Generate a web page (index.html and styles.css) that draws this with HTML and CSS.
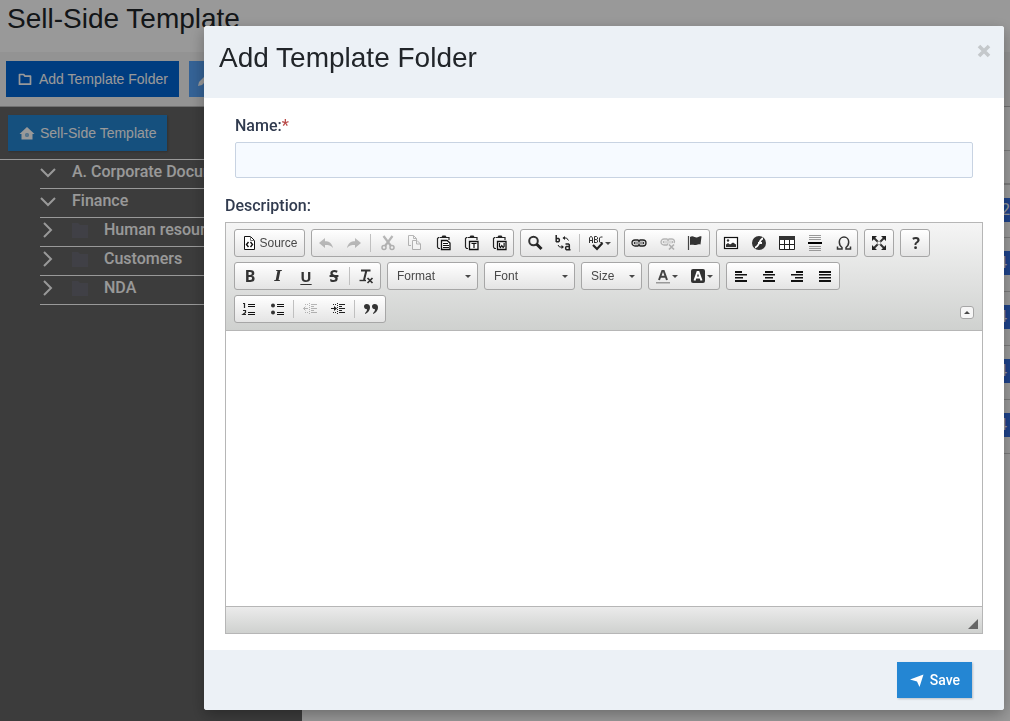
FILE: index.html
```html
<!DOCTYPE html>
<html lang="en">
<head>
<meta charset="utf-8">
<title>Sell-Side Template</title>
<link rel="stylesheet" href="styles.css">
</head>
<body>
<div class="page">
  <header class="page-head"><h1>Sell-Side Template</h1></header>
  <div class="actions">
    <button class="btn btn-primary" type="button">
      <svg class="icon" viewBox="0 0 16 16"><path d="M2.500 3.500h4.200l1.300 1.700h5.500v8H2.500z" fill="none" stroke="currentColor" stroke-width="1.700" stroke-linejoin="round"/></svg>
      Add Template Folder
    </button>
    <button class="btn btn-edit" type="button" aria-label="Edit">
      <svg class="icon" viewBox="0 0 16 16"><path d="M1 15l1-4 8-8 3 3-8 8zM11 2l1.500-1.500 3 3L14 5z" fill="currentColor"/></svg>
    </button>
  </div>
  <div class="columns">
    <aside class="sidebar">
      <div class="side-top">
        <button class="btn btn-home" type="button">
          <svg class="icon" viewBox="0 0 16 16"><path fill-rule="evenodd" d="M8 2l7.500 7H13.500v5.500h-11V9H.5zM6.500 8.500v3h3v-3zM7.300 9.300h1.400v1.400H7.300z" fill="currentColor"/></svg>
          Sell-Side Template
        </button>
      </div>
      <ul class="tree">
        <li><svg class="chev" viewBox="0 0 16 16"><path d="M1 5l7 7 7-7"/></svg>A. Corporate Documents</li>
        <li><svg class="chev" viewBox="0 0 16 16"><path d="M1 5l7 7 7-7"/></svg>Finance</li>
        <li><svg class="chev" viewBox="0 0 16 16"><path d="M4 1l7 7-7 7"/></svg><svg class="folder" viewBox="0 0 16 16"><path d="M0 1h6l2 2h8v13H0z"/></svg>Human resources</li>
        <li><svg class="chev" viewBox="0 0 16 16"><path d="M4 1l7 7-7 7"/></svg><svg class="folder" viewBox="0 0 16 16"><path d="M0 1h6l2 2h8v13H0z"/></svg>Customers</li>
        <li><svg class="chev" viewBox="0 0 16 16"><path d="M4 1l7 7-7 7"/></svg><svg class="folder" viewBox="0 0 16 16"><path d="M0 1h6l2 2h8v13H0z"/></svg>NDA</li>
      </ul>
    </aside>
    <main class="listing">
      <table class="grid">
        <thead>
          <tr><th></th></tr>
        </thead>
        <tbody>
          <tr><td><a class="count wide" href="#">2</a></td></tr>
          <tr><td><a class="count" href="#">4</a></td></tr>
          <tr><td><a class="count" href="#">4</a></td></tr>
          <tr><td><a class="count" href="#">4</a></td></tr>
          <tr><td><a class="count" href="#">4</a></td></tr>
        </tbody>
      </table>
    </main>
  </div>
</div>

<div class="overlay">
  <form class="modal" role="dialog" aria-labelledby="modal-title">
    <header class="modal-head">
      <h2 id="modal-title">Add Template Folder</h2>
      <button class="close" type="button" aria-label="Close"><svg class="icon" viewBox="0 0 16 16"><path d="M3 3l10 10M13 3L3 13" stroke="currentColor" stroke-width="3.600"/></svg></button>
    </header>
    <div class="modal-body">
      <div class="field">
        <label for="name">Name:<span class="req">*</span></label>
        <input id="name" type="text">
      </div>
      <label class="desc-label" for="description">Description:</label>
      <div class="editor">
        <div class="toolbar">
          <div class="groups">
            <div class="group">
              <button class="tool source" type="button"><svg class="icon" viewBox="0 0 16 16"><path d="M3.500 1.500h6l4 4v9h-10z" fill="#fff" stroke="#111"/><path d="M9.500 1.500v4h4" fill="none" stroke="#777"/><path d="M7.500 7L5.500 9.500l2 2.500M9.500 7l2 2.500-2 2.500" fill="none" stroke="#111" stroke-width="1.400"/></svg>Source</button>
            </div>
            <div class="group">
              <button class="tool off" type="button" aria-label="Undo"><svg class="icon" viewBox="0 0 16 16"><path d="M1 8l6-5v3.200c4 0 7 1.800 8 6.800-2-2.500-4.500-3-8-3V13z" fill="#333"/></svg></button>
              <button class="tool off" type="button" aria-label="Redo"><svg class="icon" viewBox="0 0 16 16"><path d="M15 8L9 3v3.200C5 6.200 2 8 1 13c2-2.500 4.500-3 8-3v3z" fill="#333"/></svg></button>
              <span class="sep"></span>
              <button class="tool off" type="button" aria-label="Cut"><svg class="icon shift" viewBox="0 0 16 16"><path d="M3.500 1l7.500 10M12.500 1L5 11" stroke="#222" stroke-width="2.200"/><circle cx="4" cy="12.500" r="2" fill="none" stroke="#222" stroke-width="1.500"/><circle cx="12" cy="12.500" r="2" fill="none" stroke="#222" stroke-width="1.500"/></svg></button>
              <button class="tool off" type="button" aria-label="Copy"><svg class="icon" viewBox="0 0 16 16"><path d="M4 10.500H1.500v-10h5l3 3V5M6.500.500v3h3" fill="none" stroke="#222"/><path d="M5.500 14.500v-9h4.500l3.500 3.500v5.500zM9.500 5.500V9h4" fill="#fff" stroke="#222"/></svg></button>
              <button class="tool" type="button" aria-label="Paste"><svg class="icon shift" viewBox="0 0 16 16"><path d="M3.500 2.500h-1l-1 1V12l1 1.500H4M11.500 2.500h1.500V5" fill="none" stroke="#222" stroke-width="1.200"/><path d="M4 3V2h1.500L6.500.500h3l1 1.500H12v1z" fill="#222"/><path d="M5.500 5.500h5.500l3 2.500v6.500H5.500z" fill="#fff" stroke="#111" stroke-width="1.300"/><path d="M7 8.500h5M7 10.500h6M7 12.500h6" stroke="#111"/></svg></button>
              <button class="tool" type="button" aria-label="Paste as plain text"><svg class="icon shift" viewBox="0 0 16 16"><path d="M3.500 2.500h-1l-1 1V12l1 1.500H4M11.500 2.500h1.500V5" fill="none" stroke="#222" stroke-width="1.200"/><path d="M4 3V2h1.500L6.500.500h3l1 1.500H12v1z" fill="#222"/><path d="M5.500 6.500h8.500v8H5.500z" fill="#fff" stroke="#111" stroke-width="1.300"/><path d="M7.500 8.500h5M10 8.500V13" stroke="#111" stroke-width="1.200"/></svg></button>
              <button class="tool" type="button" aria-label="Paste from Word"><svg class="icon shift" viewBox="0 0 16 16"><path d="M3.500 2.500h-1l-1 1V12l1 1.500H4M11.500 2.500h1.500V5" fill="none" stroke="#222" stroke-width="1.200"/><path d="M4 3V2h1.500L6.500.500h3l1 1.500H12v1z" fill="#222"/><path d="M5.500 6.500h8.500v8H5.500z" fill="#fff" stroke="#111" stroke-width="1.300"/><path d="M7.500 8v3.500l1 1 1.300-2 1.300 2 1-1V8" fill="none" stroke="#111" stroke-width="1.200"/></svg></button>
            </div>
            <div class="group">
              <button class="tool" type="button" aria-label="Find"><svg class="icon" viewBox="0 0 16 16"><circle cx="6.500" cy="6" r="4.300" fill="none" stroke="#333" stroke-width="2"/><path d="M9.500 9l5 5" stroke="#222" stroke-width="3"/></svg></button>
              <button class="tool" type="button" aria-label="Replace"><svg class="icon" viewBox="0 0 16 16"><path d="M1.200 0v7M1 3.500h2.500l.8.800V6l-.8.800H1M10.500 9h3l.8.800V15M14.500 11.500h-3l-.8.800V14l.8.700h4" fill="none" stroke="#222" stroke-width="1.500"/><path d="M8.500 3h3l2 2.500M3 10l1.500 2H7" fill="none" stroke="#222"/><path d="M10 1v4L7.500 3zM6.500 10v4L9 12z" fill="#222"/></svg></button>
              <span class="sep"></span>
              <button class="tool drop" type="button" aria-label="Spell check"><svg class="icon" viewBox="0 0 16 16"><path d="M1.500 8V3l1-1.500h1l1 1.500v5M1.500 5.500h3M6.500 8V1.500h2l1 1v1.500l-1 .7 1 .8V7l-1 .5h-2M6.500 4.500h2M14.500 2h-2L11.500 3v4l1 .500h2" fill="none" stroke="#333"/><path d="M5 10l4 4 5.500-6" fill="none" stroke="#222" stroke-width="2.200"/></svg></button>
            </div>
            <div class="group">
              <button class="tool" type="button" aria-label="Link"><svg class="icon" viewBox="0 0 16 16"><path d="M8 9.500L7 11H4a2.500 2.500 0 010-6h3l1 1.500L9 5h3a2.500 2.500 0 010 6H9z" fill="none" stroke="#222" stroke-width="1.300"/><path d="M4 8h8" stroke="#333" stroke-width="2.600" stroke-linecap="round"/><path d="M4 8h8" stroke="#fff"/></svg></button>
              <button class="tool off" type="button" aria-label="Unlink"><svg class="icon shift" viewBox="0 0 16 16"><path d="M8 8.500L7 10H4a2.500 2.500 0 010-6h3l1 1.500L9 4h3a2.500 2.500 0 012 4" fill="none" stroke="#222" stroke-width="1.300"/><path d="M4 7h8" stroke="#333" stroke-width="2.600" stroke-linecap="round"/><path d="M4 7h8" stroke="#fff"/><path d="M9 9.500l5 5M14 9.500l-5 5" stroke="#222" stroke-width="1.700"/></svg></button>
              <button class="tool" type="button" aria-label="Anchor"><svg class="icon" viewBox="0 0 16 16"><path d="M1.500 1v14" stroke="#444" stroke-width="1.200"/><path d="M3 2c3-2 5 1 7 .5S13 1 14.500 1.500L13.500 9.500c-3-1-4 1-6 .5S4 9.500 3 10z" fill="#333"/></svg></button>
            </div>
            <div class="group">
              <button class="tool" type="button" aria-label="Image"><svg class="icon" viewBox="0 0 16 16"><rect x="1.500" y="2.500" width="13" height="11" fill="#fff" stroke="#111" stroke-width="1.200"/><path d="M3 12V9.500l2-1.500 2 1.500L10 7.500l3 2V12z" fill="#333"/><circle cx="5" cy="5.500" r="1.200" fill="#333"/></svg></button>
              <button class="tool" type="button" aria-label="Flash"><svg class="icon" viewBox="0 0 16 16"><circle cx="8" cy="8" r="7" fill="#333"/><path d="M12 3.500C8.500 3.500 8.500 12 4 12.500M7 8h4" fill="none" stroke="#fff" stroke-width="1.800"/></svg></button>
              <button class="tool" type="button" aria-label="Table"><svg class="icon" viewBox="0 0 16 16"><path d="M.5 1.500h15v13H.5zM.5 9.500h15M5.500 4v10.500M10.500 4v10.500" fill="#fff" stroke="#222"/><path d="M0 1h16v4H0z" fill="#333"/></svg></button>
              <button class="tool" type="button" aria-label="Horizontal line"><svg class="icon" viewBox="0 0 16 16"><path d="M2 .5h12M2 2.500h12M2 4.500h12M2 11.500h12M2 13.500h12M2 15.500h12" stroke="#999"/><path d="M1 7h14v2H1z" fill="#000"/></svg></button>
              <button class="tool" type="button" aria-label="Special character"><svg class="icon shift" viewBox="0 0 16 16"><path d="M1.500 11.500V14H6v-1.500C4 11 3.300 9.300 3.300 7a4.700 5 0 019.400 0c0 2.300-.7 4-2.700 5.500V14h4.500v-2.500" fill="none" stroke="#333" stroke-width="1.500"/></svg></button>
            </div>
            <div class="group">
              <button class="tool" type="button" aria-label="Maximize"><svg class="icon" viewBox="0 0 16 16"><path d="M3 3l10 10M13 3L3 13" stroke="#333" stroke-width="2"/><path d="M1 1h5L1 6zM15 1v5l-5-5zM1 15v-5l5 5zM15 15h-5l5-5z" fill="#222"/><path d="M6.500 6.500h3v3h-3z" fill="#f4f4f4"/></svg></button>
            </div>
            <div class="group">
              <button class="tool letter" type="button" aria-label="About">?</button>
            </div>
            <div class="group">
              <button class="tool letter" type="button">B</button>
              <button class="tool letter italic" type="button">I</button>
              <button class="tool letter under" type="button">U</button>
              <button class="tool letter strike" type="button">S</button>
              <span class="sep"></span>
              <button class="tool" type="button" aria-label="Remove format"><svg class="icon" viewBox="0 0 16 16"><path d="M3 2.500h9.500M8.500 2L6 12" fill="none" stroke="#333" stroke-width="2"/><path d="M1.500 12.500h6.500" stroke="#333" stroke-width="1.400"/><path d="M9.500 10l5 5M14.500 10l-5 5" stroke="#333" stroke-width="1.700"/></svg></button>
            </div>
            <span class="combo"><select aria-label="Format"><option>Format</option></select></span>
            <span class="combo"><select aria-label="Font"><option>Font</option></select></span>
            <span class="combo small"><select aria-label="Size"><option>Size</option></select></span>
            <div class="group">
              <button class="tool drop" type="button" aria-label="Text color"><svg class="icon" viewBox="0 0 16 16"><path d="M4 12L7.300 3h1.400L12 12M5.500 8.800h5" fill="none" stroke="#444" stroke-width="2"/><path d="M1 14h14v1.500H1z" fill="#999"/></svg></button>
              <button class="tool drop" type="button" aria-label="Background color"><svg class="icon" viewBox="0 0 16 16"><rect x="1" y="1" width="14" height="14" rx="2" fill="#333"/><path d="M4.500 12.500L7.500 4h1l3 8.500M5.500 9.500h5" fill="none" stroke="#fff" stroke-width="2"/></svg></button>
            </div>
            <div class="group">
              <button class="tool" type="button" aria-label="Align left"><svg class="icon" viewBox="0 0 16 16"><path d="M2 3h7v2H2zM2 6h12v1.500H2zM2 9h8v1.500H2zM2 12h12v2H2z" fill="#111"/></svg></button>
              <button class="tool" type="button" aria-label="Center"><svg class="icon" viewBox="0 0 16 16"><path d="M4 3h8v2H4zM2 6h12v1.500H2zM4 9h8v1.500H4zM2 12h12v2H2z" fill="#111"/></svg></button>
              <button class="tool" type="button" aria-label="Align right"><svg class="icon" viewBox="0 0 16 16"><path d="M7 3h7v2H7zM2 6h12v1.500H2zM6 9h8v1.500H6zM2 12h12v2H2z" fill="#111"/></svg></button>
              <button class="tool" type="button" aria-label="Justify"><svg class="icon" viewBox="0 0 16 16"><path d="M2 3h12v2H2zM2 6h12v1.500H2zM2 9h12v1.500H2zM2 12h12v2H2z" fill="#111"/></svg></button>
            </div>
            <div class="group">
              <button class="tool" type="button" aria-label="Numbered list"><svg class="icon" viewBox="0 0 16 16"><path d="M2 2.500h1.500V7M2 9.500h2.500v2L2 13.500h3" fill="none" stroke="#222" stroke-width="1.200"/><path d="M7 3h7v1H7zM7 5h7v1H7zM7 11h7v1H7zM7 13h7v1H7z" fill="#111"/></svg></button>
              <button class="tool" type="button" aria-label="Bulleted list"><svg class="icon shift" viewBox="0 0 16 16"><circle cx="3" cy="4.500" r="2" fill="#333"/><circle cx="3" cy="11.500" r="2" fill="#333"/><path d="M7 3h7v1H7zM7 5h7v1H7zM7 11h7v1H7zM7 13h7v1H7z" fill="#111"/></svg></button>
              <span class="sep"></span>
              <button class="tool off" type="button" aria-label="Decrease indent"><svg class="icon" viewBox="0 0 16 16"><path d="M9 3.500h6M9 5.500h3M9 7.500h6M9 9.500h3M9 11.500h6" stroke="#222"/><path d="M7.500 2v12M3 3.500h3M3 11.500h3" stroke="#222" stroke-dasharray="1 1"/><path d="M1.500 7.500H6M3.500 5.500l-2 2 2 2" fill="none" stroke="#222"/></svg></button>
              <button class="tool" type="button" aria-label="Increase indent"><svg class="icon" viewBox="0 0 16 16"><path d="M9 3.500h6M9 5.500h3M9 7.500h6M9 9.500h3M9 11.500h6" stroke="#222"/><path d="M7.500 2v12M3 3.500h3M3 11.500h3" stroke="#222" stroke-dasharray="1 1"/><path d="M1 7.500h3" stroke="#222"/><path d="M4 5l3 2.500L4 10z" fill="#222"/></svg></button>
              <span class="sep"></span>
              <button class="tool" type="button" aria-label="Block quote"><svg class="icon" viewBox="0 0 16 16"><path d="M3.500 3C6 3 7.200 4.500 7 7s-2 4.800-5 6v-1c1.300-1 2-2.200 2-3.800C2.200 8.200 1 7.200 1 5.600S2 3 3.500 3zM11.500 3c2.500 0 3.700 1.500 3.500 4s-2 4.800-5 6v-1c1.300-1 2-2.200 2-3.800-1.800 0-3-1-3-2.600S10 3 11.500 3z" fill="#333"/></svg></button>
            </div>
          </div>
          <button class="collapse" type="button" aria-label="Collapse toolbar"></button>
        </div>
        <textarea id="description"></textarea>
        <div class="editor-foot"><span class="grip"></span></div>
      </div>
    </div>
    <footer class="modal-foot">
      <button class="btn btn-save" type="submit">
        <svg class="icon" viewBox="0 0 16 16"><path d="M14.500 2.500L10.500 15 8 9.500 1 7.500z" fill="currentColor"/></svg>
        Save
      </button>
    </footer>
  </form>
</div>
</body>
</html>
```
FILE: styles.css
```css
* { box-sizing: border-box; }
body {
  margin: 0;
  font-family: "Liberation Sans", Arial, sans-serif;
  font-size: 14px;
  color: #212529;
  background: #fff;
}
button, input, select, textarea { font: inherit; margin: 0; }
h1, h2 { margin: 0; font-size: 28px; font-weight: 400; line-height: 36px; }
.icon { width: 16px; height: 16px; display: block; flex: none; }

.page { display: flex; flex-direction: column; height: 100vh; overflow: hidden; }
.page-head { height: 52px; padding: 1px 7px; flex: none; }
.actions {
  display: flex;
  gap: 10px;
  flex: none;
  height: 55px;
  padding: 9px 6px;
  background: #f5f5f5;
  border-bottom: 1px solid #bbb;
}
.btn {
  display: inline-flex;
  align-items: center;
  gap: 6px;
  height: 36px;
  padding: 0 11px;
  border: 0;
  color: #fff;
  white-space: nowrap;
}
.btn-primary { background: #0066d6; }
.btn-edit { padding: 0 8px; background: #58a4fa; }
.btn-home, .btn-save { background: #2486d3; box-shadow: 1px 1px 2px rgba(0, 0, 0, .2); }
.btn-home { gap: 5px; }

.columns { display: flex; flex: 1; min-height: 0; }
.sidebar { width: 302px; background: #656565; color: #fff; }
.side-top { padding: 8px; border-bottom: 1px solid #fff; }
.tree {
  margin: 0;
  padding: 0 0 0 40px;
  list-style: none;
  font: 500 16px/24px Roboto, sans-serif;
}
.tree li {
  display: flex;
  align-items: center;
  height: 29px;
  padding-bottom: 5px;
  border-bottom: 1px solid #fff;
}
.chev { width: 16px; height: 16px; margin-right: 16px; fill: none; stroke: #fff; stroke-width: 2; }
.folder { width: 16px; height: 16px; margin-right: 16px; fill: #6c6c76; }

.listing { flex: 1; padding-top: 43px; }
.grid { width: 100%; border-collapse: collapse; border-top: 1px solid #ccc; }
.grid th { height: 33px; padding: 0; border-bottom: 2px solid #ccc; }
.grid td {
  height: 54px;
  padding: 13px 0 0;
  border-bottom: 1px solid #ccc;
  text-align: right;
  vertical-align: top;
}
.count {
  display: inline-block;
  padding: 0 3px 0 4px;
  background: #326fe6;
  color: #fff;
  font: 16px/24px Roboto, sans-serif;
  text-decoration: none;
}
.count.wide { padding-right: 0; }

.overlay {
  position: fixed;
  inset: 0;
  display: flex;
  align-items: flex-start;
  padding: 26px 6px 11px 204px;
  background: rgba(0, 0, 0, .4);
}
.modal {
  flex: 1;
  min-width: 0;
  border-radius: 3px;
  overflow: hidden;
  background: #fff;
  box-shadow: 0 5px 15px rgba(0, 0, 0, .3);
}
.modal-head {
  display: flex;
  justify-content: space-between;
  align-items: flex-start;
  padding: 14px 12px 22px 15px;
  background: #ecf1f6;
}
.close { padding: 3px 0; border: 0; background: none; color: #c4c8cb; }
.modal-body { padding: 16px 21px; }
label { display: block; font: 500 16px/24px Roboto, sans-serif; color: #313b4f; }
.req { color: #b94a48; }
.field { padding: 0 10px; margin-bottom: 16px; }
.field input {
  display: block;
  width: 100%;
  height: 36px;
  margin-top: 4px;
  padding: 0 10px;
  border: 1px solid #c8d3e2;
  border-radius: 2px;
  background: #f6faff;
}
.desc-label { margin-bottom: 4px; }
.editor { border: 1px solid #b6b6b6; }
.toolbar {
  display: flex;
  align-items: flex-end;
  gap: 8px;
  padding: 6px 8px;
  border-bottom: 1px solid #b6b6b6;
  background: linear-gradient(#f5f5f5, #cfd1cf);
}
.groups { display: flex; flex-wrap: wrap; gap: 5px 6px; flex: 1; padding-bottom: 1px; }
.group {
  display: flex;
  align-items: center;
  height: 28px;
  border: 1px solid #a6a6a6;
  border-radius: 3px;
  background: linear-gradient(#fff, #e4e4e4);
}
.tool {
  display: flex;
  align-items: center;
  justify-content: center;
  width: 28px;
  height: 26px;
  padding: 0;
  border: 0;
  background: none;
  color: #333;
}
.tool .shift { margin-left: 1px; }
.tool.off .icon { opacity: .3; }
.tool.source { width: 69px; gap: 2px; font-size: 12px; color: #484848; }
.tool.drop { width: 35px; gap: 1px; }
.tool.drop::after, .combo::after, .collapse::after {
  content: "";
  border: 3px solid transparent;
  border-top-color: #484848;
  border-bottom: 0;
}
.letter { padding-left: 2px; font: 700 16px/20px "Noto Sans", sans-serif; }
.italic { font-family: "DejaVu Serif", serif; font-size: 15px; font-style: italic; }
.under { font-size: 15px; text-decoration: underline; text-underline-offset: 2px; }
.strike { text-decoration: line-through; text-decoration-thickness: 2px; }
.sep { width: 1px; height: 18px; margin: 0 2px; background: #c0c0c0; }
.combo {
  position: relative;
  width: 91px;
  height: 28px;
}
.combo.small { width: 61px; }
.combo select {
  appearance: none;
  width: 100%;
  height: 28px;
  padding: 0 9px;
  border: 1px solid #a6a6a6;
  border-radius: 3px;
  background: linear-gradient(#fff, #e4e4e4);
  font-size: 12px;
  color: #484848;
}
.combo::after { position: absolute; right: 7px; top: 13px; pointer-events: none; }
.collapse {
  display: flex;
  align-items: center;
  justify-content: center;
  width: 14px;
  height: 13px;
  margin-bottom: 5px;
  padding: 0;
  border: 1px solid #a6a6a6;
  border-radius: 3px;
  background: #f6f6f6;
}
.collapse::after { transform: rotate(180deg); }
textarea {
  display: block;
  width: 100%;
  height: 275px;
  padding: 20px;
  border: 0;
  outline: 0;
  resize: none;
  background: #fff;
}
.editor-foot {
  display: flex;
  justify-content: flex-end;
  align-items: flex-end;
  height: 27px;
  padding: 4px;
  border-top: 1px solid #b6b6b6;
  background: linear-gradient(#ebebeb, #cfd1cf);
}
.grip { border: 5px solid #666; border-top-color: transparent; border-left-color: transparent; }
.modal-foot {
  display: flex;
  justify-content: flex-end;
  padding: 12px 32px;
  background: #ecf1f6;
}
.btn-save { gap: 5px; padding: 0 12px; font: 500 14px/20px Roboto, sans-serif; }
```
